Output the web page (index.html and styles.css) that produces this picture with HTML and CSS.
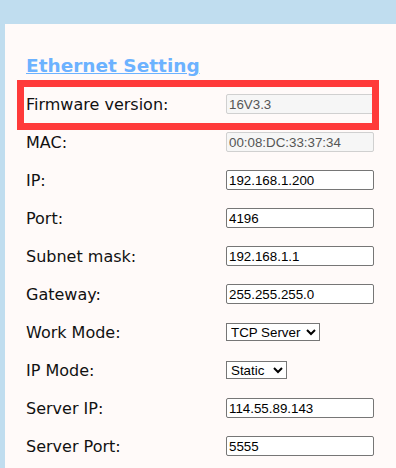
FILE: index.html
```html
<!DOCTYPE html>
<html lang="en">
<head>
    <meta charset="UTF-8">
    <title>Ethernet Setting</title>
    <link rel="stylesheet" href="styles.css">
</head>
<body>
    <div class="panel">
        <h2 class="title"><a href="#">Ethernet Setting</a></h2>
        <div class="form">
            <div class="row">
                <label>Firmware version:</label>
                <input type="text" value="16V3.3" disabled>
            </div>
            <div class="row">
                <label>MAC:</label>
                <input type="text" value="00:08:DC:33:37:34" disabled>
            </div>
            <div class="row">
                <label>IP:</label>
                <input type="text" value="192.168.1.200">
            </div>
            <div class="row">
                <label>Port:</label>
                <input type="text" value="4196">
            </div>
            <div class="row">
                <label>Subnet mask:</label>
                <input type="text" value="192.168.1.1">
            </div>
            <div class="row">
                <label>Gateway:</label>
                <input type="text" value="255.255.255.0">
            </div>
            <div class="row">
                <label>Work Mode:</label>
                <select class="mode">
                    <option>TCP Server</option>
                    <option>TCP Client</option>
                    <option>UDP</option>
                </select>
            </div>
            <div class="row">
                <label>IP Mode:</label>
                <select class="ipmode">
                    <option>Static</option>
                    <option>DHCP</option>
                </select>
            </div>
            <div class="row">
                <label>Server IP:</label>
                <input type="text" value="114.55.89.143">
            </div>
            <div class="row">
                <label>Server Port:</label>
                <input type="text" value="5555">
            </div>
        </div>
        <div class="mark"></div>
    </div>
</body>
</html>
```

FILE: styles.css
```css
body {
    margin: 0;
    background: #c0ddef;
    font-family: "DejaVu Sans", Verdana, sans-serif;
}

html, body {
    height: 100%;
    overflow: hidden;
}

.panel {
    position: relative;
    box-sizing: border-box;
    margin: 24px 0 0 5px;
    padding: 31px 0 0 21px;
    height: 444px;
    background: #fffaf9;
}

.title {
    margin: 0 0 9px 0;
    font-size: 18.5px;
    line-height: 21px;
    font-weight: bold;
}

.title a {
    color: #6cb2ff;
    text-decoration: underline;
}

.row {
    display: flex;
    align-items: center;
    height: 38px;
}

.row label {
    width: 200px;
    font-size: 16px;
    color: #111;
}

.row input {
    box-sizing: border-box;
    width: 148px;
    height: 20px;
    padding: 0 2px;
    border: 1px solid #767676;
    border-radius: 2px;
    font-family: "Liberation Sans", Arial, sans-serif;
    font-size: 13.33px;
    color: #000;
    background: #fff;
}

.row input:disabled {
    border-color: #d0d0d0;
    background: #f6f6f6;
    color: #555;
}

.row select {
    height: 18px;
    font-family: "Liberation Sans", Arial, sans-serif;
    font-size: 13.33px;
    border: 1px solid #767676;
    background: #fff;
    color: #000;
}

.mode {
    width: 94px;
}

.ipmode {
    width: 61px;
}

/* annotation box round the firmware row */
.mark {
    position: absolute;
    left: 12px;
    top: 56px;
    width: 348px;
    height: 36px;
    border: 7px solid #ff3a3a;
}
```
